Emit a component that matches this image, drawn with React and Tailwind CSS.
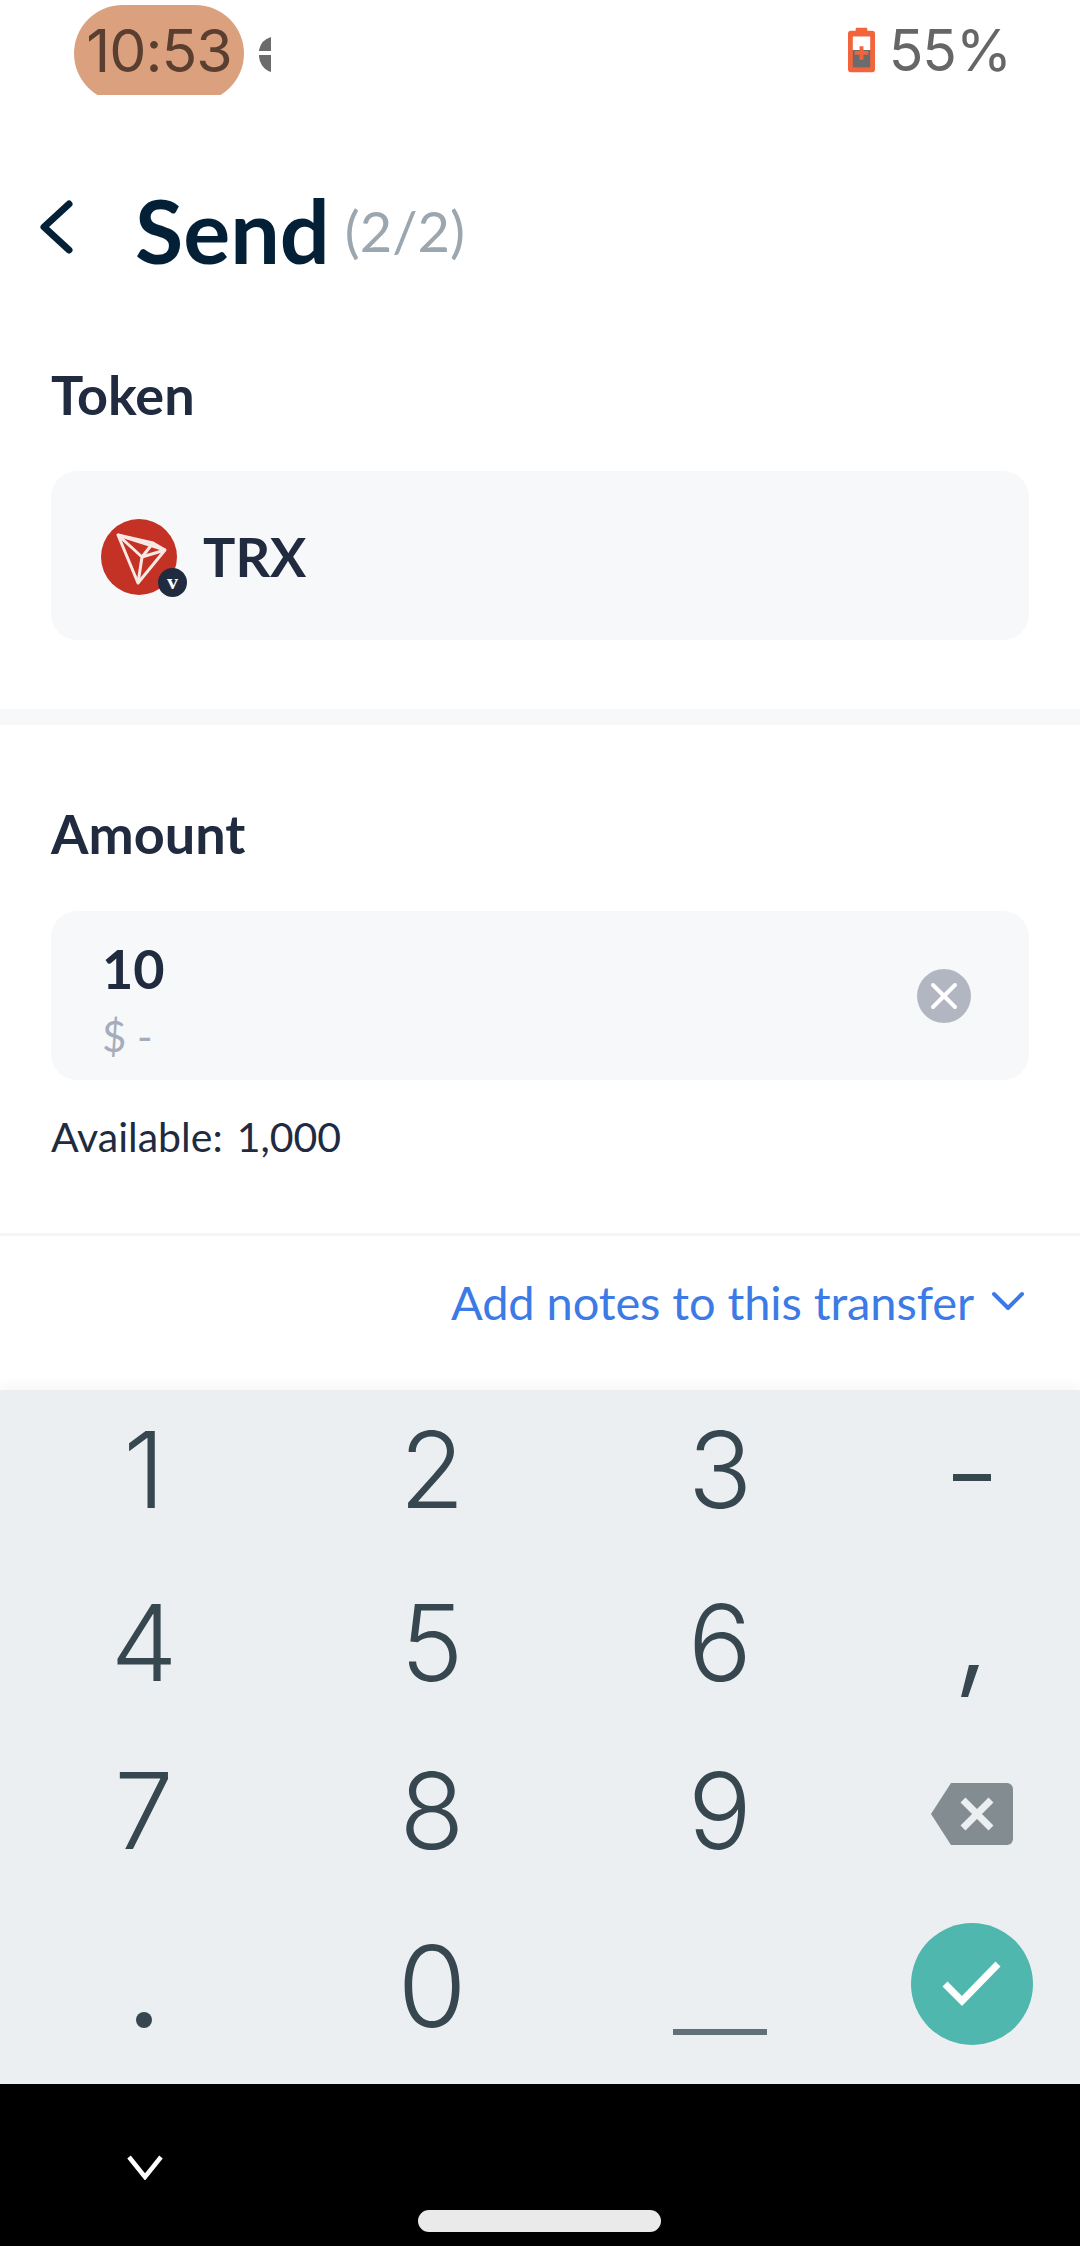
import React from "react";

const Key = ({ children, className = "" }) => (
  <div className={`flex items-center justify-center text-[#37474f] text-[106px] leading-none font-['Inter',sans-serif] [font-weight:360] ${className}`}>
    {children}
  </div>
);

export default function App() {
  return (
    <div className="w-[1080px] h-[2246px] flex flex-col bg-white overflow-hidden font-['Lato',sans-serif]">
      {/* status bar */}
      <div className="h-[95px] pt-[5px] pl-[74px] pr-[72px] flex items-start shrink-0">
        <div className="w-[170px] h-[90px] overflow-hidden">
          <div className="h-[97px] pb-[7px] bg-[#dba17f] rounded-[49px] flex items-center justify-center text-[#5a3f30] text-[59px] font-['Inter',sans-serif] tracking-[-1px] leading-none">
            10:53
          </div>
        </div>
        <svg className="ml-[15px] mt-[29px]" width="12" height="40" viewBox="0 0 12 40">
          <path d="M12 3 A17 17 0 0 0 0 16 L0 17 H12 Z" fill="#6b6b6b" />
          <path d="M0 21 H12 V38 A17 17 0 0 1 0 21 Z" fill="#6b6b6b" />
        </svg>
        <div className="ml-auto flex items-center h-[90px] gap-[14px] mr-[-3px]">
          <svg width="27" height="46" viewBox="0 0 28 46">
            <path d="M9 0 H19 a1 1 0 0 1 1 1 V3 H25 a3 3 0 0 1 3 3 V43 a3 3 0 0 1 -3 3 H3 a3 3 0 0 1 -3 -3 V6 a3 3 0 0 1 3 -3 H8 V1 a1 1 0 0 1 1 -1 Z" fill="#f2643b" />
            <rect x="5" y="9" width="18" height="14" fill="#ffffff" />
            <rect x="5" y="23" width="18" height="18" fill="#6b6b6b" />
            <path d="M12 19 H16 V24 H21 V28 H16 V33 H12 V28 H7 V24 H12 Z" fill="#f2643b" />
          </svg>
          <span className="text-[#666666] text-[57px] leading-none font-['Inter',sans-serif] tracking-[-1px]">55%</span>
        </div>
      </div>

      {/* header */}
      <div className="h-[245px] flex items-center shrink-0 pl-[38px] pt-[24px]">
        <svg className="-mt-[6px]" width="36" height="56" viewBox="0 0 36 56" fill="none" stroke="#042036" strokeWidth="7" strokeLinecap="round" strokeLinejoin="round">
          <path d="M31 5 L6 28 L31 51" />
        </svg>
        <span className="ml-[61px] text-[#042036] text-[88px] font-bold leading-none">Send</span>
        <span className="ml-[15px] mt-[2px] text-[#9ca6af] text-[56px] font-normal leading-none">(2/2)</span>
      </div>

      {/* token */}
      <div className="pl-[51px] pr-[51px] pt-[29px] pb-[69px] shrink-0">
        <div className="text-[#212b40] text-[54px] font-bold leading-[52px]">Token</div>
        <div className="mt-[50px] h-[169px] rounded-[26px] bg-[#f7f8fa] flex items-center pl-[51px]">
          <div className="relative w-[76px] h-[76px] shrink-0 -ml-[1px] mt-[2px]">
            <svg width="76" height="76" viewBox="0 0 76 76">
              <circle cx="38" cy="38" r="38" fill="#c43125" />
              <g fill="none" stroke="#f9e8e4" strokeWidth="3" strokeLinejoin="round">
                <path d="M17 17 L64 32 L37 65 Z" transform="translate(0 -1)" />
                <path d="M17 16 L41 38 L37 64" />
                <path d="M41 38 L64 31" />
                <path d="M17 16 L52 24 L41 38" />
                <path d="M52 24 L64 31" />
              </g>
            </svg>
            <div className="absolute left-[57px] top-[49px] w-[29px] h-[29px] rounded-full bg-[#212b40] flex items-center justify-center text-white text-[22px] font-bold leading-none font-['Liberation_Serif',serif]">
              v
            </div>
          </div>
          <span className="ml-[26px] mt-[3px] text-[#212b40] text-[54px] font-bold leading-none">TRX</span>
        </div>
      </div>

      <div className="h-[16px] bg-[#f7f8fa] shrink-0" />

      {/* amount */}
      <div className="pl-[51px] pr-[51px] pt-[83px] shrink-0">
        <div className="text-[#212b40] text-[54px] font-bold leading-[52px]">Amount</div>
        <div className="mt-[51px] h-[169px] rounded-[26px] bg-[#f7f8fa] flex items-center justify-between pl-[51px] pr-[58px]">
          <div className="flex flex-col pt-[7px]">
            <span className="text-[#212b40] text-[54px] font-bold leading-[60px]">10</span>
            <span className="mt-[13px] text-[#a5adbd] text-[42px] leading-[48px]">$ -</span>
          </div>
          <div className="w-[54px] h-[54px] rounded-full bg-[#b1b6c1] flex items-center justify-center">
            <svg width="28" height="28" viewBox="0 0 28 28" fill="none" stroke="#ffffff" strokeWidth="4" strokeLinecap="round">
              <path d="M3 3 L25 25 M25 3 L3 25" />
            </svg>
          </div>
        </div>
        <div className="mt-[33px] flex text-[#212b40] text-[41px] leading-[48px]">
          <span>Available:</span>
          <span className="ml-[14px]">1,000</span>
        </div>
      </div>

      <div className="mt-[72px] h-[3px] bg-[#f4f5f7] shrink-0" />

      {/* notes */}
      <div className="flex items-start justify-end pt-[38px] pr-[56px] flex-1 bg-white text-[#3c7ae6]">
        <span className="text-[47px] leading-[56px] tracking-[-0.1px]">Add notes to this transfer</span>
        <svg className="ml-[18px] mt-[17px]" width="32" height="20" viewBox="0 0 32 20" fill="none" stroke="#3c7ae6" strokeWidth="4" strokeLinecap="round" strokeLinejoin="round">
          <path d="M2 3 L16 17 L30 3" />
        </svg>
      </div>

      {/* keypad */}
      <div className="h-[694px] shrink-0 bg-[#ebeff2] shadow-[0_-6px_10px_rgba(0,0,0,0.03)] grid grid-cols-[288px_288px_288px_216px] grid-rows-4">
        <Key className="pb-[14px]">1</Key>
        <Key className="pb-[14px]">2</Key>
        <Key className="pb-[14px]">3</Key>
        <Key className="pt-[2px]">
          <div className="w-[38px] h-[7px] bg-[#37474f]" />
        </Key>
        <Key className="pb-[14px]">4</Key>
        <Key className="pb-[14px]">5</Key>
        <Key className="pb-[14px]">6</Key>
        <Key>
          <svg className="mt-[62px] -ml-[4px]" width="18" height="32" viewBox="0 0 18 32">
            <path d="M8 0 H18 L7 32 H0 Z" fill="#37474f" />
          </svg>
        </Key>
        <Key className="pb-[25px]">7</Key>
        <Key className="pb-[25px]">8</Key>
        <Key className="pb-[25px]">9</Key>
        <Key className="pb-[20px]">
          <svg width="82" height="62" viewBox="0 0 82 62">
            <path d="M20 0 H76 a6 6 0 0 1 6 6 V56 a6 6 0 0 1 -6 6 H20 L0 31 Z" fill="#838d91" />
            <path d="M32 17 L60 45 M60 17 L32 45" stroke="#ebeff2" strokeWidth="7" fill="none" />
          </svg>
        </Key>
        <Key>
          <div className="w-[16px] h-[16px] mt-[46px] rounded-full bg-[#37474f]" />
        </Key>
        <Key className="pb-[22px] text-[112px]">0</Key>
        <Key>
          <div className="w-[94px] h-[6px] mt-[70px] bg-[#636f76]" />
        </Key>
        <Key className="pb-[26px]">
          <div className="w-[122px] h-[122px] rounded-full bg-[#4fb7ad] flex items-center justify-center">
            <svg width="60" height="48" viewBox="0 0 60 48" fill="none" stroke="#ffffff" strokeWidth="7">
              <path d="M3 24 L20 41 L56 4" />
            </svg>
          </div>
        </Key>
      </div>

      {/* nav */}
      <div className="h-[162px] shrink-0 bg-black relative">
        <svg className="absolute left-[127px] top-[70px]" width="36" height="26" viewBox="0 0 36 26" fill="none" stroke="#ffffff" strokeWidth="4.5">
          <path d="M2 3 L18 23 L34 3" />
        </svg>
        <div className="absolute left-[418px] top-[126px] w-[243px] h-[22px] rounded-full bg-[#eaeaea]" />
      </div>
    </div>
  );
}
